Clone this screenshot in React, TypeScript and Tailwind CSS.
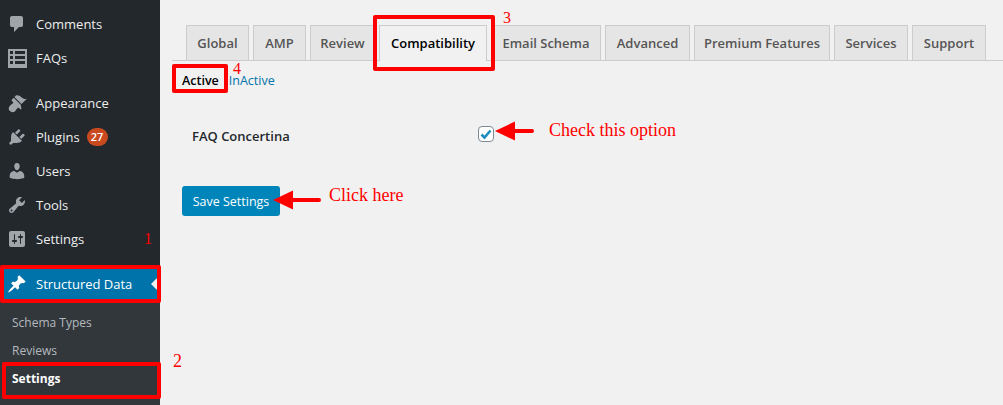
import React from 'react';

const dashicons = {
  comments: 'M5 2h9q.82 0 1.41.59T16 4v7q0 .82-.59 1.41T14 13h-2l-5 5v-5H5q-.82 0-1.41-.59T3 11V4q0-.82.59-1.41T5 2z',
  faqs: 'M1 1h19v19H1V1zm2 2v3h3V3H3zm5 0v3h10V3H8zM3 8v3h3V8H3zm5 0v3h10V8H8zm-5 5v3h3v-3H3zm5 0v3h10v-3H8z',
  appearance: 'M14.48 11.06L7.41 3.99l1.5-1.5c.5-.56 2.3-.47 3.51.32 1.21.8 1.43 1.28 2.91 2.1 1.18.64 2.45 1.26 4.45.85zm-.71.71L6.7 4.7 4.93 6.47c-.39.39-.39 1.02 0 1.41l1.06 1.06c.39.39.39 1.03 0 1.42-.6.6-1.43 1.11-2.21 1.69-.35.26-.7.53-1.01.84-1.43 1.43-1.4 3.75.06 5.21 1.46 1.46 3.78 1.49 5.21.06.31-.31.58-.66.84-1.01.58-.78 1.09-1.61 1.69-2.21.39-.39 1.03-.39 1.42 0l1.06 1.06c.39.39 1.02.39 1.41 0z',
  plugins: 'M13.11 4.36L9.87 7.6 8 5.73l3.24-3.24c.35-.34 1.05-.2 1.56.32.52.51.66 1.21.31 1.55zm-8 1.77l.91-1.12 9.01 9.01-1.19.84c-.71.71-2.63 1.16-3.82 1.16H6.14L4.9 17.26c-.59.59-1.54.59-2.12 0-.59-.58-.59-1.53 0-2.12l1.24-1.24v-3.88c0-1.13.4-3.19 1.09-3.89zm7.26 3.97l3.24-3.24c.34-.35 1.04-.21 1.55.31.52.51.66 1.21.31 1.55l-3.24 3.25z',
  users: 'M10 9.25c-2.27 0-2.73-3.44-2.73-3.44C7 4.02 7.82 2 9.97 2c2.16 0 2.98 2.02 2.71 3.81 0 0-.41 3.44-2.68 3.44zm0 2.57L12.72 10c2.39 0 4.52 2.33 4.52 4.53v2.49s-3.65 1.13-7.24 1.13c-3.65 0-7.24-1.13-7.24-1.13v-2.49c0-2.25 1.94-4.48 4.47-4.48z',
  tools: 'M16.68 9.77c-1.34 1.34-3.3 1.67-4.95.99l-5.41 6.52c-.99.99-2.59.99-3.58 0s-.99-2.59 0-3.57l6.52-5.42c-.68-1.65-.35-3.61.99-4.95 1.28-1.28 3.12-1.62 4.72-1.06l-2.89 2.89 2.82 2.82 2.86-2.87c.53 1.58.18 3.39-1.08 4.65zM3.81 16.21c.4.39 1.04.39 1.43 0 .4-.4.4-1.04 0-1.43-.39-.4-1.03-.4-1.43 0-.39.39-.39 1.03 0 1.43z',
  settings: 'M18 16V4c0-1.1-.9-2-2-2H4c-1.1 0-2 .9-2 2v12c0 1.1.9 2 2 2h12c1.1 0 2-.9 2-2zM8 11h1c.55 0 1 .45 1 1s-.45 1-1 1H8v1.5c0 .28-.22.5-.5.5s-.5-.22-.5-.5V13H6c-.55 0-1-.45-1-1s.45-1 1-1h1V5.5c0-.28.22-.5.5-.5s.5.22.5.5V11zm5-2h-1c-.55 0-1-.45-1-1s.45-1 1-1h1V5.5c0-.28.22-.5.5-.5s.5.22.5.5V7h1c.55 0 1 .45 1 1s-.45 1-1 1h-1v5.5c0 .28-.22.5-.5.5s-.5-.22-.5-.5V9z',
  pin: 'M10.44 3.02l1.82-1.82 6.36 6.35-1.83 1.82c-1.05-.68-2.48-.57-3.41.36l-.75.75c-.92.93-1.04 2.35-.35 3.41l-1.83 1.82-2.41-2.41-2.8 2.79c-.42.42-3.38 2.71-3.8 2.29s1.86-3.39 2.28-3.81l2.79-2.79L4.1 9.36l1.83-1.82c1.05.69 2.48.57 3.4-.36l.75-.75c.93-.92 1.05-2.35.36-3.41z',
};

const Dashicon = ({ d, className }: { d: string; className: string }) => (
  <svg viewBox="0 0 20 20" width="20" height="20" fill="currentColor" fillRule="evenodd" className={className}>
    <path d={d} />
  </svg>
);

const MenuItem = ({ icon, label, children }: { icon: string; label: string; children?: React.ReactNode }) => (
  <div className="flex h-[34px] items-center pl-[7px] text-[13px] text-[#eeeeee]">
    <Dashicon d={icon} className="mr-[9px] shrink-0 text-[#a0a5aa]" />
    <span className="pt-[2px]">{label}</span>
    {children}
  </div>
);

const tabs = [
  { label: 'Global', className: 'w-[63px]' },
  { label: 'AMP', className: 'w-[53px]' },
  { label: 'Review', className: 'w-[65px]' },
  { label: 'Compatibility', className: 'w-[108px]', active: true },
  { label: 'Email Schema', className: 'w-[110px]' },
  { label: 'Advanced', className: 'w-[85px]' },
  { label: 'Premium Features', className: 'w-[136px]' },
  { label: 'Services', className: 'w-[74px]' },
  { label: 'Support', className: 'w-[74px]' },
];

const Arrow = ({ className, width }: { className: string; width: number }) => (
  <svg viewBox={`0 0 ${width} 20`} width={width} height="20" className={className}>
    <path d="M0 10L20 0.5V19.5Z" fill="#ff0000" />
    <path d={`M18 8H${width - 2}a2 2 0 0 1 0 4H18Z`} fill="#ff0000" />
  </svg>
);

const Note = ({ className, children }: { className: string; children: React.ReactNode }) => (
  <span className={`absolute font-['Liberation_Serif',serif] leading-none text-[#ff0000] ${className}`}>{children}</span>
);

export default function App() {
  return (
    <div className="relative flex h-[405px] w-[1003px] overflow-hidden bg-[#f1f1f1] font-['Open_Sans',sans-serif]">
      <aside className="flex w-[160px] shrink-0 flex-col bg-[#23282d] pt-[7px]">
        <MenuItem icon={dashicons.comments} label="Comments" />
        <MenuItem icon={dashicons.faqs} label="FAQs" />
        <div className="h-[11px]" />
        <MenuItem icon={dashicons.appearance} label="Appearance" />
        <MenuItem icon={dashicons.plugins} label="Plugins">
          <span className="ml-[7px] flex h-[18px] w-[21px] items-center justify-center rounded-full bg-[#ca4a1f] text-[11px] font-semibold text-white">27</span>
        </MenuItem>
        <MenuItem icon={dashicons.users} label="Users" />
        <MenuItem icon={dashicons.tools} label="Tools" />
        <MenuItem icon={dashicons.settings} label="Settings" />
        <div className="h-[11px]" />
        <div className="relative flex h-[34px] items-center bg-[#0073aa] pl-[7px] text-[13px] text-white">
          <Dashicon d={dashicons.pin} className="mr-[9px] shrink-0 text-white" />
          <span className="pt-[2px]">Structured Data</span>
          <span className="absolute right-[3px] top-[11px] h-0 w-0 border-y-[6px] border-r-[6px] border-y-transparent border-r-[#f1f1f1]" />
        </div>
        <div className="flex flex-1 flex-col bg-[#32373c] pt-[8px] text-[12px] text-[#b4b9be]">
          <div className="flex h-[28px] items-center pl-[12px]">Schema Types</div>
          <div className="flex h-[28px] items-center pl-[12px]">Reviews</div>
          <div className="flex h-[28px] items-center pl-[12px] font-bold text-white">Settings</div>
        </div>
      </aside>

      <main className="flex-1 pt-[25px]">
        <div className="ml-[12px] flex gap-[4px] border-b border-[#cccccc] pl-[14px]">
          {tabs.map((tab) => (
            <div
              key={tab.label}
              className={
                tab.active
                  ? `-mb-px flex h-[36px] items-center justify-center border border-b-0 border-[#cccccc] bg-[#f1f1f1] pt-[1px] text-[13px] font-semibold text-black ${tab.className}`
                  : `flex h-[35px] items-center justify-center border border-b-0 border-[#cccccc] bg-[#e5e5e5] pt-[2px] text-[13px] font-semibold text-[#555555] ${tab.className}`
              }
            >
              {tab.label}
            </div>
          ))}
        </div>

        <div className="ml-[22px] mt-[10px] flex h-[20px] items-center gap-[10px] text-[12.5px]">
          <span className="font-semibold text-black">Active</span>
          <span className="text-[#0073aa]">InActive</span>
        </div>

        <div className="ml-[32px] mt-[33px] flex h-[20px] items-center text-[13px] font-semibold text-[#23282d]">
          <span className="w-[286px] pt-[5px]">FAQ Concertina</span>
          <span className="flex h-[16px] w-[16px] items-center justify-center rounded-[4px] border border-[#7e8993] bg-white">
            <svg viewBox="0 0 14 14" width="14" height="14">
              <path d="M2.5 7.5L5.5 10.5L11.5 3.5" fill="none" stroke="#1e8cbe" strokeWidth="2.6" />
            </svg>
          </span>
        </div>

        <button className="ml-[22px] mt-[42px] flex h-[30px] w-[98px] items-center justify-center rounded-[3px] bg-[#0085ba] pt-[2px] text-[12.5px] font-medium text-white">
          Save Settings
        </button>
      </main>

      {/* red annotations laid over the screenshot */}
      <div className="absolute left-0 top-[265px] h-[38px] w-[161px] rounded-[2px] border-[4px] border-[#ff0000]" />
      <div className="absolute left-[2px] top-[362px] h-[37px] w-[159px] rounded-[2px] border-[4px] border-[#ff0000]" />
      <div className="absolute left-[373px] top-[15px] h-[56px] w-[122px] rounded-[2px] border-[4px] border-[#ff0000]" />
      <div className="absolute left-[172px] top-[64px] h-[29px] w-[56px] rounded-[2px] border-[4px] border-[#ff0000]" />
      <Arrow width={39} className="absolute left-[495px] top-[121px]" />
      <Arrow width={48} className="absolute left-[273px] top-[190px]" />
      <Note className="left-[549px] top-[121px] text-[18px]">Check this option</Note>
      <Note className="left-[329px] top-[186px] text-[18px]">Click here</Note>
      <Note className="left-[144px] top-[231px] text-[16px]">1</Note>
      <Note className="left-[173px] top-[352px] text-[18px]">2</Note>
      <Note className="left-[503px] top-[10px] text-[16px]">3</Note>
      <Note className="left-[233px] top-[61px] text-[16px]">4</Note>
    </div>
  );
}
